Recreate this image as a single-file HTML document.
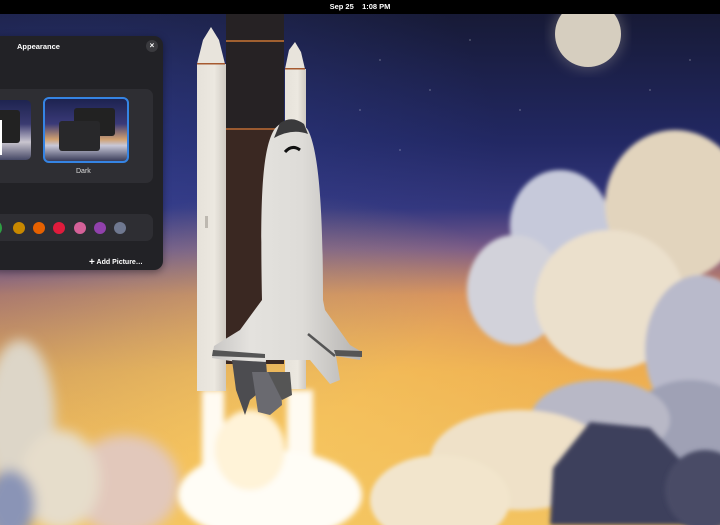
<!DOCTYPE html>
<html><head><meta charset="utf-8"><style>
html,body{margin:0;padding:0;width:720px;height:525px;overflow:hidden;background:#000;font-family:"Liberation Sans",sans-serif}
#bar{position:absolute;left:0;top:0;width:720px;height:14px;background:#000;color:#fff;font-size:7.5px;font-weight:bold;text-align:center;line-height:14px}
svg.bg{position:absolute;left:0;top:14px}
#panel{position:absolute;left:-10px;top:36px;width:173px;height:234px;background:#222226;border-radius:9px;box-shadow:0 2px 8px rgba(0,0,0,.4)}
.t{position:absolute;color:#fff;font-size:7.5px;font-weight:bold}
.card{position:absolute;background:#2e2e33;border-radius:7px}
.dot{position:absolute;width:12px;height:12px;border-radius:50%;top:222px}
</style></head><body>
<div id="bar">Sep 25&nbsp;&nbsp;&nbsp;&nbsp;1:08 PM</div>
<svg class="bg" width="720" height="511" viewBox="0 14 720 511">
<defs>
<linearGradient id="sky" x1="0" y1="0" x2="0" y2="1">
<stop offset="0" stop-color="#171a36"/><stop offset="0.25" stop-color="#222863"/><stop offset="0.38" stop-color="#33367c"/><stop offset="0.46" stop-color="#7a5a88"/><stop offset="0.55" stop-color="#d48a5c"/><stop offset="0.7" stop-color="#eeae50"/><stop offset="1" stop-color="#f2c260"/>
</linearGradient>
<radialGradient id="lft" cx="0.1" cy="0.3" r="0.6"><stop offset="0" stop-color="#3848a0" stop-opacity="0.5"/><stop offset="1" stop-color="#3848a0" stop-opacity="0"/></radialGradient>
<radialGradient id="glow" cx="0.38" cy="0.85" r="0.5"><stop offset="0" stop-color="#f7c860" stop-opacity="0.8"/><stop offset="1" stop-color="#f7c860" stop-opacity="0"/></radialGradient>
<filter id="b2"><feGaussianBlur stdDeviation="2"/></filter>
<filter id="b3"><feGaussianBlur stdDeviation="3"/></filter>
<filter id="b6"><feGaussianBlur stdDeviation="6"/></filter>
<linearGradient id="bst" x1="0" x2="1"><stop offset="0" stop-color="#e6e2da"/><stop offset="0.6" stop-color="#ece8e0"/><stop offset="1" stop-color="#cfcac2"/></linearGradient>
<linearGradient id="orb" x1="0" x2="1"><stop offset="0" stop-color="#c8c6c4"/><stop offset="0.25" stop-color="#e4e2de"/><stop offset="0.6" stop-color="#dedcd8"/><stop offset="1" stop-color="#b4b2b0"/></linearGradient>
</defs>
<rect x="0" y="14" width="720" height="511" fill="url(#sky)"/>
<rect x="0" y="14" width="720" height="511" fill="url(#lft)"/>
<rect x="0" y="14" width="720" height="511" fill="url(#glow)"/>
<circle cx="588" cy="34" r="36" fill="#d8cfc0" opacity="0.25" filter="url(#b6)"/>
<circle cx="588" cy="34" r="33" fill="#d6cebf"/>
<!-- right clouds -->
<g filter="url(#b2)">
<ellipse cx="560" cy="225" rx="50" ry="55" fill="#c6c9da"/>
<ellipse cx="515" cy="290" rx="48" ry="55" fill="#d2d2da"/>
<ellipse cx="675" cy="205" rx="70" ry="75" fill="#e2d4bd"/>
<ellipse cx="610" cy="300" rx="75" ry="70" fill="#ebe0cc"/>
<ellipse cx="700" cy="350" rx="55" ry="75" fill="#b9bacb"/>
<ellipse cx="690" cy="440" rx="70" ry="60" fill="#9fa1b5"/>
<ellipse cx="600" cy="420" rx="70" ry="40" fill="#b8b8c6"/>
<ellipse cx="520" cy="460" rx="90" ry="50" fill="#efe1c8"/>
<ellipse cx="440" cy="500" rx="70" ry="45" fill="#f2e5cc"/>
</g>
<path d="M553 468 L590 422 L650 428 L690 470 L700 525 L550 525 Z" fill="#3c3f5c" filter="url(#b2)"/>
<ellipse cx="705" cy="490" rx="40" ry="40" fill="#4a4c66" filter="url(#b2)"/>
<!-- left clouds -->
<g filter="url(#b6)">
<ellipse cx="20" cy="420" rx="35" ry="80" fill="#ddd6c8"/>
<ellipse cx="125" cy="485" rx="55" ry="50" fill="#e2c8bb"/>
<ellipse cx="60" cy="480" rx="40" ry="50" fill="#e6ddcb"/>
<ellipse cx="10" cy="505" rx="25" ry="35" fill="#8a94b6"/>
</g>
<!-- exhaust -->
<g filter="url(#b3)">
<rect x="202" y="390" width="22" height="100" fill="#fffbf2"/>
<rect x="287" y="390" width="26" height="90" fill="#fffbf2"/>
<ellipse cx="270" cy="495" rx="92" ry="45" fill="#fffdf6"/>
<ellipse cx="250" cy="450" rx="35" ry="40" fill="#fff3d8"/>
</g>
<!-- external tank -->
<rect x="226" y="14" width="58" height="350" fill="#3a2822"/>
<rect x="226" y="14" width="58" height="116" fill="#262224"/>
<rect x="226" y="40" width="58" height="2" fill="#a06030"/>
<rect x="226" y="128" width="58" height="2" fill="#9a5a30"/>
<!-- left booster -->
<path d="M197 64 L203 40 L211 27 L219 40 L225 64 Z" fill="#e8e4dc"/>
<rect x="197" y="64" width="29" height="327" fill="url(#bst)"/>
<rect x="197" y="63" width="28" height="1.5" fill="#a65a30"/>
<rect x="205" y="216" width="3" height="12" fill="#bdb8b0"/>
<!-- right booster -->
<path d="M285 69 L289 50 L295 42 L301 52 L305 69 Z" fill="#e8e4dc"/>
<rect x="285" y="69" width="21" height="320" fill="url(#bst)"/>
<rect x="285" y="68" width="20" height="1.5" fill="#a65a30"/>
<!-- orbiter -->
<path d="M262 300 C260 200 262 150 274 130 C282 118 300 118 308 130 C318 150 323 200 323 300 L325 310 L350 345 L362 352 L360 360 L336 356 L340 380 L330 384 L310 360 L266 360 L265 372 L240 372 L237 362 L212 358 L214 346 L240 330 Z" fill="url(#orb)"/>
<path d="M274 138 L280 123 Q292 115 304 124 L308 134 Q292 128 274 138Z" fill="#3a3a3c"/>
<path d="M285 152 Q292 144 300 150" stroke="#111" stroke-width="3" fill="none"/>
<path d="M213 350 L265 354 L265 358 L212 356Z" fill="#555"/>
<path d="M334 350 L362 351 L362 357 L336 356Z" fill="#555"/>
<path d="M308 334 L335 356" stroke="#555" stroke-width="2.5"/>
<path d="M232 360 L266 362 L268 385 L250 400 L245 415 L236 390Z" fill="#4c4c50"/>
<path d="M252 372 L280 372 L282 405 L270 415 L258 412Z" fill="#6a6a70"/>
<path d="M268 372 L290 372 L292 395 L282 400Z" fill="#555"/>
<!-- stars -->
<g fill="#fff" opacity="0.6"><circle cx="380" cy="60" r=".6"/><circle cx="430" cy="90" r=".6"/><circle cx="470" cy="40" r=".6"/><circle cx="520" cy="110" r=".6"/><circle cx="400" cy="150" r=".6"/><circle cx="650" cy="90" r=".6"/><circle cx="690" cy="60" r=".6"/><circle cx="360" cy="110" r=".6"/></g>
</svg>
<div id="panel">
<div class="t" style="left:27px;top:6px">Appearance</div>
<div style="position:absolute;left:156px;top:4px;width:12px;height:12px;border-radius:50%;background:#3a3a3e;color:#fff;font-size:8px;font-weight:bold;text-align:center;line-height:12px">×</div>
<div class="card" style="left:0;top:53px;width:163px;height:94px">
 <div style="position:absolute;left:0;top:11px;width:41px;height:60px;border-radius:5px;background:linear-gradient(#1e2450,#3a3a70 40%,#c9c5cf 70%,#454866)"><div style="position:absolute;left:0;top:10px;width:30px;height:33px;background:#222;border-radius:3px"></div><div style="position:absolute;left:0;top:20px;width:12px;height:35px;background:#fff"></div></div>
 <div style="position:absolute;left:53px;top:8px;width:82px;height:62px;border:2px solid #3584e4;border-radius:6px;overflow:hidden;background:linear-gradient(#1d2350,#3a3a78 40%,#d0a070 65%,#c8c8d8 75%,#3a3d5a)">
  <div style="position:absolute;left:29px;top:9px;width:41px;height:28px;background:#222;border-radius:3px"></div>
  <div style="position:absolute;left:14px;top:22px;width:41px;height:30px;background:#28282a;border-radius:3px"></div>
 </div>
 <div style="position:absolute;left:86px;top:79px;color:#ddd;font-size:7px">Dark</div>
 <div style="position:absolute;left:0;top:79px;color:#ddd;font-size:7px">t</div>
</div>
<div class="card" style="left:0;top:178px;width:163px;height:27px"></div>
<div class="dot" style="left:4px;background:#2ea043;top:186px;width:8px"></div>
<div class="dot" style="left:23px;background:#c88800;top:186px"></div>
<div class="dot" style="left:43px;background:#e66100;top:186px"></div>
<div class="dot" style="left:63px;background:#e01b3c;top:186px"></div>
<div class="dot" style="left:84px;background:#d56199;top:186px"></div>
<div class="dot" style="left:104px;background:#9141ac;top:186px"></div>
<div class="dot" style="left:124px;background:#6f7890;top:186px"></div>
<div class="t" style="left:99px;top:221px;font-size:7px"><span style="font-size:10px;vertical-align:-1px">+</span> Add Picture…</div>
</div>
</body></html>
